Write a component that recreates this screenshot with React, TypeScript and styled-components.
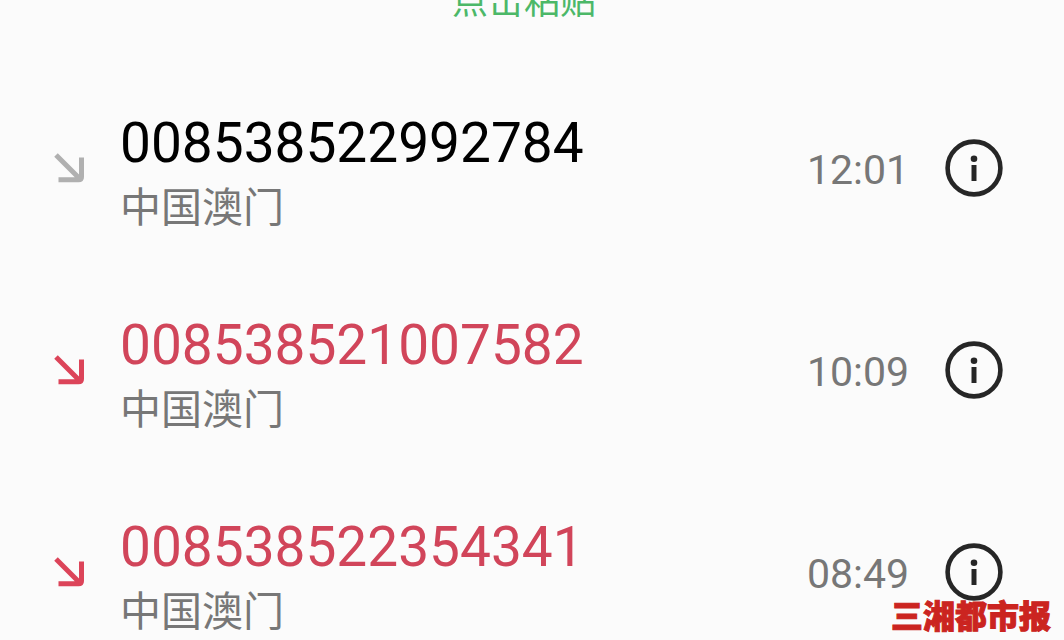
import React from "react";
import styled, { createGlobalStyle } from "styled-components";

const Global = createGlobalStyle`
  * { box-sizing: border-box; }
  body {
    margin: 0;
    background: #fbfbfb;
    font-family: Roboto, "Noto Sans CJK SC", sans-serif;
    overflow: hidden;
  }
`;

const Screen = styled.main`
  position: relative;
  height: 100vh;
  overflow: hidden;
`;

const PasteBar = styled.header`
  display: flex;
  justify-content: center;
  height: 67px;
`;

const PasteButton = styled.button`
  align-self: flex-start;
  margin: -18px 16px 0 0;
  padding: 0;
  border: 0;
  background: none;
  color: #4cb868;
  font: 400 36px/40px Roboto, "Noto Sans CJK SC", sans-serif;
`;

const CallList = styled.ul`
  margin: 0;
  padding: 0;
  list-style: none;
`;

const CallRow = styled.li`
  display: flex;
  align-items: center;
  height: 202px;
  padding: 0 61px 0 52px;
`;

const Direction = styled.svg<{ $missed: boolean }>`
  flex: none;
  width: 34px;
  height: 34px;
  fill: none;
  stroke: ${(p) => (p.$missed ? "#dc4459" : "#b0b0b0")};
  stroke-width: 5;
`;

const Caller = styled.div`
  flex: 1;
  min-width: 0;
  padding: 16px 0 0 34px;
`;

const PhoneNumber = styled.div<{ $missed: boolean }>`
  color: ${(p) => (p.$missed ? "#d1455a" : "#000")};
  font-size: 55px;
  line-height: 64px;
`;

const Region = styled.div`
  color: #777;
  font-size: 41px;
  line-height: 66px;
`;

const Time = styled.time`
  width: 138px;
  padding-top: 4px;
  color: #777;
  font-size: 41px;
  line-height: 50px;
`;

const InfoButton = styled.button`
  flex: none;
  width: 58px;
  height: 58px;
  padding: 0;
  border: 0;
  background: none;
  svg { display: block; }
`;

const Watermark = styled.div`
  position: absolute;
  right: 13px;
  bottom: 0;
  color: #cb2420;
  font-size: 32px;
  font-weight: 900;
  line-height: 46px;
  -webkit-text-stroke: 1px #cb2420;
`;

const calls = [
  { number: "008538522992784", region: "中国澳门", time: "12:01", missed: false },
  { number: "008538521007582", region: "中国澳门", time: "10:09", missed: true },
  { number: "008538522354341", region: "中国澳门", time: "08:49", missed: true },
];

export default function App() {
  return (
    <>
      <Global />
      <Screen>
        <PasteBar>
          <PasteButton type="button">点击粘贴</PasteButton>
        </PasteBar>
        <CallList>
          {calls.map((call) => (
            <CallRow key={call.number}>
              <Direction $missed={call.missed} viewBox="0 0 34 34" aria-hidden="true">
                <path d="M4 4 27 27M29.5 6.5V26Q29.5 28.8 26.5 28.8H6.5" />
              </Direction>
              <Caller>
                <PhoneNumber $missed={call.missed}>{call.number}</PhoneNumber>
                <Region>{call.region}</Region>
              </Caller>
              <Time>{call.time}</Time>
              <InfoButton type="button" aria-label={`Details for ${call.number}`}>
                <svg width="58" height="58" viewBox="0 0 58 58" aria-hidden="true">
                  <circle cx="29" cy="29" r="26.4" fill="none" stroke="#262626" strokeWidth="4.6" />
                  <circle cx="29" cy="19.7" r="3.3" fill="#262626" />
                  <path d="M26.5 26h5v16h-5z" fill="#262626" />
                </svg>
              </InfoButton>
            </CallRow>
          ))}
        </CallList>
        <Watermark>三湘都市报</Watermark>
      </Screen>
    </>
  );
}
